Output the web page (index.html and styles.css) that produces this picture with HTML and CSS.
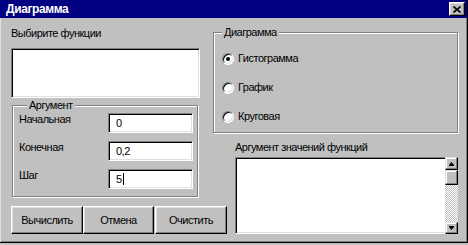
FILE: index.html
```html
<!DOCTYPE html>
<html lang="ru">
<head>
<meta charset="utf-8">
<title>Диаграмма</title>
<link rel="stylesheet" href="styles.css">
</head>
<body>
<div class="window">
  <div class="titlebar">
    <span class="title">Диаграмма</span>
    <button class="close" aria-label="Закрыть">
      <svg width="8" height="7" viewBox="0 0 8 7"><path d="M0.5 0.5 L7.5 6.5 M7.5 0.5 L0.5 6.5" stroke="#000" stroke-width="1.6" fill="none"/></svg>
    </button>
  </div>
  <div class="body">
    <div class="col-left">
      <div class="label">Выбирите функции</div>
      <div class="listbox sunken"></div>
      <fieldset class="group arg">
        <legend>Аргумент</legend>
        <div class="arg-grid">
          <span class="arg-label">Начальная</span><div class="field sunken">0</div>
          <span class="arg-label">Конечная</span><div class="field sunken">0,2</div>
          <span class="arg-label">Шаг</span><div class="field sunken">5<span class="caret"></span></div>
        </div>
      </fieldset>
      <div class="buttons">
        <button class="btn w72">Вычислить</button>
        <button class="btn w71">Отмена</button>
        <button class="btn w72 sep">Очистить</button>
      </div>
    </div>
    <div class="col-right">
      <fieldset class="group diag">
        <legend>Диаграмма</legend>
        <div class="radio-list">
          <div class="radio"><span class="dot checked"></span>Гистограмма</div>
          <div class="radio"><span class="dot"></span>График</div>
          <div class="radio"><span class="dot"></span>Круговая</div>
        </div>
      </fieldset>
      <div class="memo-block">
        <div class="label">Аргумент значений функций</div>
        <div class="memo">
          <div class="memo-area"></div>
          <div class="scrollbar">
            <div class="sb-btn up"><svg width="5" height="4" viewBox="0 0 5 4"><path d="M2.5 0 L5 3 L0 3 Z" fill="#000"/><rect x="0" y="3" width="5" height="1" fill="#000"/></svg></div>
            <div class="sb-thumb"></div>
            <div class="sb-track"></div>
            <div class="sb-btn down"><svg width="5" height="4" viewBox="0 0 5 4"><rect x="0" y="0" width="5" height="1" fill="#000"/><path d="M0 1 L5 1 L2.5 4 Z" fill="#000"/></svg></div>
          </div>
        </div>
      </div>
    </div>
  </div>
</div>
</body>
</html>
```
FILE: styles.css
```css
* { box-sizing: border-box; }

html, body {
  margin: 0;
  background: #c0c0c0;
}

body {
  font-family: "Liberation Sans", Arial, sans-serif;
  font-size: 11px;
  letter-spacing: -0.5px;
  color: #000;
  line-height: 13px;
}

.window {
  width: 468px;
  height: 243px;
  border-right: 1px solid #000;
  border-bottom: 1px solid #000;
  box-shadow: inset 1px 0 0 #dfdfdf, inset -1px -1px 0 #808080;
  display: flex;
  flex-direction: column;
}

.titlebar {
  height: 18px;
  background: #000080;
  display: flex;
  align-items: center;
  justify-content: space-between;
  padding: 0 2px 0 6px;
}

.title {
  color: #fff;
  font-weight: bold;
  font-size: 12px;
  letter-spacing: -0.4px;
}

.close {
  width: 16px;
  height: 14px;
  padding: 0;
  margin: 0;
  background: #c0c0c0;
  border: 1px solid;
  border-color: #fff #000 #000 #fff;
  box-shadow: inset -1px -1px 0 #808080, inset 1px 1px 0 #dfdfdf;
  display: flex;
  align-items: center;
  justify-content: center;
}

.body {
  display: flex;
  padding-left: 11px;
  gap: 13px;
}

.col-left {
  width: 189px;
  padding-top: 9px;
  display: flex;
  flex-direction: column;
}

.label {
  line-height: 13px;
  white-space: nowrap;
}

.sunken {
  background: #fff;
  border: 1px solid;
  border-color: #808080 #fff #fff #808080;
  box-shadow: inset 1px 1px 0 #000, inset -1px -1px 0 #dfdfdf;
}

.listbox {
  margin-top: 8px;
  height: 50px;
  width: 189px;
}

.group {
  margin: 0;
  min-width: 0;
  border: 1px solid #808080;
  box-shadow: inset 1px 1px 0 #fff, 1px 1px 0 #fff;
}

.group legend {
  margin-left: 8px;
  padding: 0 2px;
  line-height: 13px;
  background: #c0c0c0;
}

.arg {
  margin: 1px 2px 0 1px;
  padding: 1px 4px 7px 6px;
}

.arg-grid {
  display: grid;
  grid-template-columns: 89px 85px;
  row-gap: 8px;
  align-items: start;
}

.arg-label {
  line-height: 13px;
}

.field {
  height: 20px;
  padding: 0 7px;
  line-height: 17px;
  display: flex;
  align-items: center;
}

.caret {
  display: inline-block;
  width: 1px;
  height: 12px;
  background: #000;
  margin-left: 1px;
}

.buttons {
  display: flex;
  margin-top: 9px;
  width: 216px;
}

.btn {
  height: 28px;
  padding: 0;
  margin: 0;
  font: inherit;
  letter-spacing: inherit;
  color: #000;
  background: #c0c0c0;
  border: 1px solid;
  border-color: #fff #000 #000 #fff;
  box-shadow: inset -1px -1px 0 #808080, inset 1px 1px 0 #dfdfdf;
}

.w72 { width: 72px; }
.w71 { width: 71px; }
.sep { margin-left: 1px; }

.col-right {
  width: 245px;
  padding-top: 8px;
  display: flex;
  flex-direction: column;
}

.diag {
  padding: 0;
}

.radio-list {
  display: flex;
  flex-direction: column;
  gap: 16px;
  padding: 13px 0 9px 8px;
}

.radio {
  display: flex;
  align-items: center;
  gap: 4px;
  height: 13px;
  white-space: nowrap;
}

.dot {
  position: relative;
  width: 12px;
  height: 12px;
  border-radius: 50%;
  background: #fff;
  border: 1px solid;
  border-color: #808080 #fff #fff #808080;
  box-shadow: inset 1px 1px 0 #000, inset -1px -1px 0 #dfdfdf;
  flex: none;
}

.dot.checked::after {
  content: "";
  position: absolute;
  left: 3px;
  top: 3px;
  width: 4px;
  height: 4px;
  border-radius: 50%;
  background: #000;
}

.memo-block {
  margin-left: 22px;
  margin-top: 8px;
}

.memo {
  margin-top: 3px;
  width: 223px;
  height: 77px;
  display: flex;
}

.memo-area {
  flex: 1;
  background: #fff;
  border: 1px solid;
  border-right: none;
  border-color: #808080 #fff #fff #808080;
  box-shadow: inset 1px 1px 0 #000, inset 0 -1px 0 #dfdfdf;
}

.scrollbar {
  width: 13px;
  display: flex;
  flex-direction: column;
}

.sb-btn,
.sb-thumb {
  background: #c0c0c0;
  border: 1px solid;
  border-color: #dfdfdf #000 #000 #dfdfdf;
  box-shadow: inset -1px -1px 0 #808080, inset 1px 1px 0 #fff;
  display: flex;
  align-items: center;
  justify-content: center;
}

.sb-btn.up { height: 13px; }
.sb-thumb { height: 15px; }
.sb-btn.down { height: 12px; }

.sb-track {
  flex: 1;
  background-color: #c0c0c0;
  background-image: repeating-conic-gradient(#c0c0c0 0% 25%, #fff 0% 50%);
  background-size: 2px 2px;
}
```
